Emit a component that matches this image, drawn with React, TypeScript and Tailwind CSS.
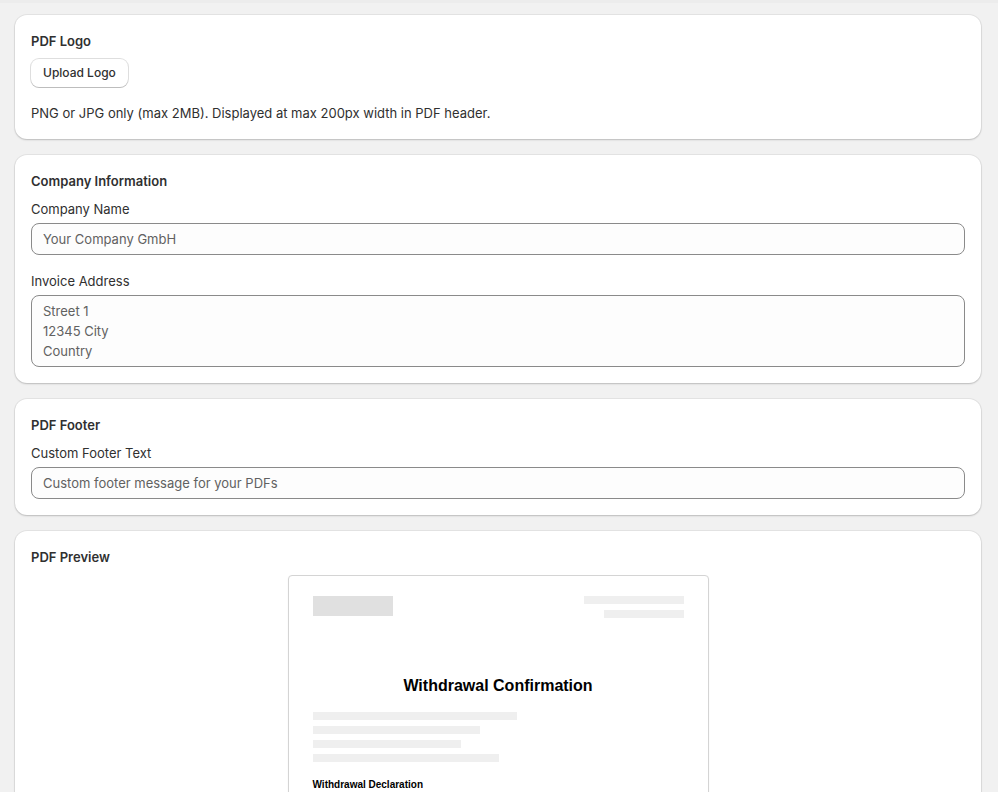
const FONT = { fontFamily: 'Inter, "Noto Sans", sans-serif' };

function Card({ title, children }: { title: string; children?: React.ReactNode }) {
  return (
    <section className="rounded-xl bg-white p-4 shadow-[0_0_0_1px_rgba(0,0,0,0.05),0_1px_2px_rgba(0,0,0,0.18)]">
      <h2 className="text-[13px] font-semibold leading-5 text-[#303030]">{title}</h2>
      {children}
    </section>
  );
}

function Field({ label, children }: { label: string; children: React.ReactNode }) {
  return (
    <div className="flex flex-col gap-1">
      <label className="text-[13px] leading-5 text-[#303030]">{label}</label>
      {children}
    </div>
  );
}

export default function App() {
  return (
    <div className="min-h-screen border-t-[3px] border-[#ececec] bg-[#f1f1f1] text-[#303030]" style={FONT}>
      <div className="flex flex-col gap-4 pb-4 pl-[15px] pr-[17px] pt-[12px]">
        {/* logo */}
        <Card title="PDF Logo">
          <button className="mt-2 h-[28px] rounded-lg bg-white px-3 text-xs font-medium text-[#303030] shadow-[0_0_0_1px_rgba(0,0,0,0.13),0_1px_0_rgba(0,0,0,0.15)]">
            Upload Logo
          </button>
          <p className="mt-4 text-[13px] leading-5 text-[#303030]">
            PNG or JPG only (max 2MB). Displayed at max 200px width in PDF header.
          </p>
        </Card>

        {/* company */}
        <Card title="Company Information">
          <div className="mt-2 flex flex-col gap-4">
            <Field label="Company Name">
              <input
                placeholder="Your Company GmbH"
                className="h-8 rounded-lg border border-[#8a8a8a] bg-[#fdfdfd] px-[11px] text-[13px] placeholder:text-[#616161]"
              />
            </Field>
            <Field label="Invoice Address">
              <textarea
                rows={3}
                placeholder={'Street 1\n12345 City\nCountry'}
                className="h-[72px] resize-none rounded-lg border border-[#8a8a8a] bg-[#fdfdfd] px-[11px] py-[5px] text-[13px] leading-5 placeholder:text-[#616161]"
              />
            </Field>
          </div>
        </Card>

        {/* footer */}
        <Card title="PDF Footer">
          <div className="mt-2">
            <Field label="Custom Footer Text">
              <input
                placeholder="Custom footer message for your PDFs"
                className="h-8 rounded-lg border border-[#8a8a8a] bg-[#fdfdfd] px-[11px] text-[13px] placeholder:text-[#616161]"
              />
            </Field>
          </div>
        </Card>

        {/* preview */}
        <Card title="PDF Preview">
          <div className="mt-2 flex justify-center">
            <div
              className="w-[421px] rounded border border-[#d4d4d4] bg-white px-6 pb-10 pt-5 shadow-[0_1px_2px_rgba(0,0,0,0.06)]"
              style={{ fontFamily: '"Liberation Sans", Arial, sans-serif' }}
            >
              <div className="flex items-start justify-between">
                <div className="h-5 w-20 bg-[#e0e0e0]" />
                <div className="flex flex-col items-end gap-1.5">
                  <div className="h-2 w-[100px] bg-[#efefef]" />
                  <div className="h-2 w-20 bg-[#efefef]" />
                </div>
              </div>
              <h1 className="mt-[56px] text-center text-base font-bold leading-6 text-black">Withdrawal Confirmation</h1>
              <div className="mt-[14px] flex flex-col gap-1.5">
                <div className="h-2 w-[204px] bg-[#efefef]" />
                <div className="h-2 w-[167px] bg-[#efefef]" />
                <div className="h-2 w-[148px] bg-[#efefef]" />
                <div className="h-2 w-[186px] bg-[#efefef]" />
              </div>
              <h3 className="mt-[15px] text-[10px] font-bold leading-[15px] text-black">Withdrawal Declaration</h3>
              <div className="mt-2 flex flex-col gap-1.5">
                <div className="h-2 w-full bg-[#efefef]" />
                <div className="h-2 w-[80%] bg-[#efefef]" />
              </div>
            </div>
          </div>
        </Card>
      </div>
    </div>
  );
}
